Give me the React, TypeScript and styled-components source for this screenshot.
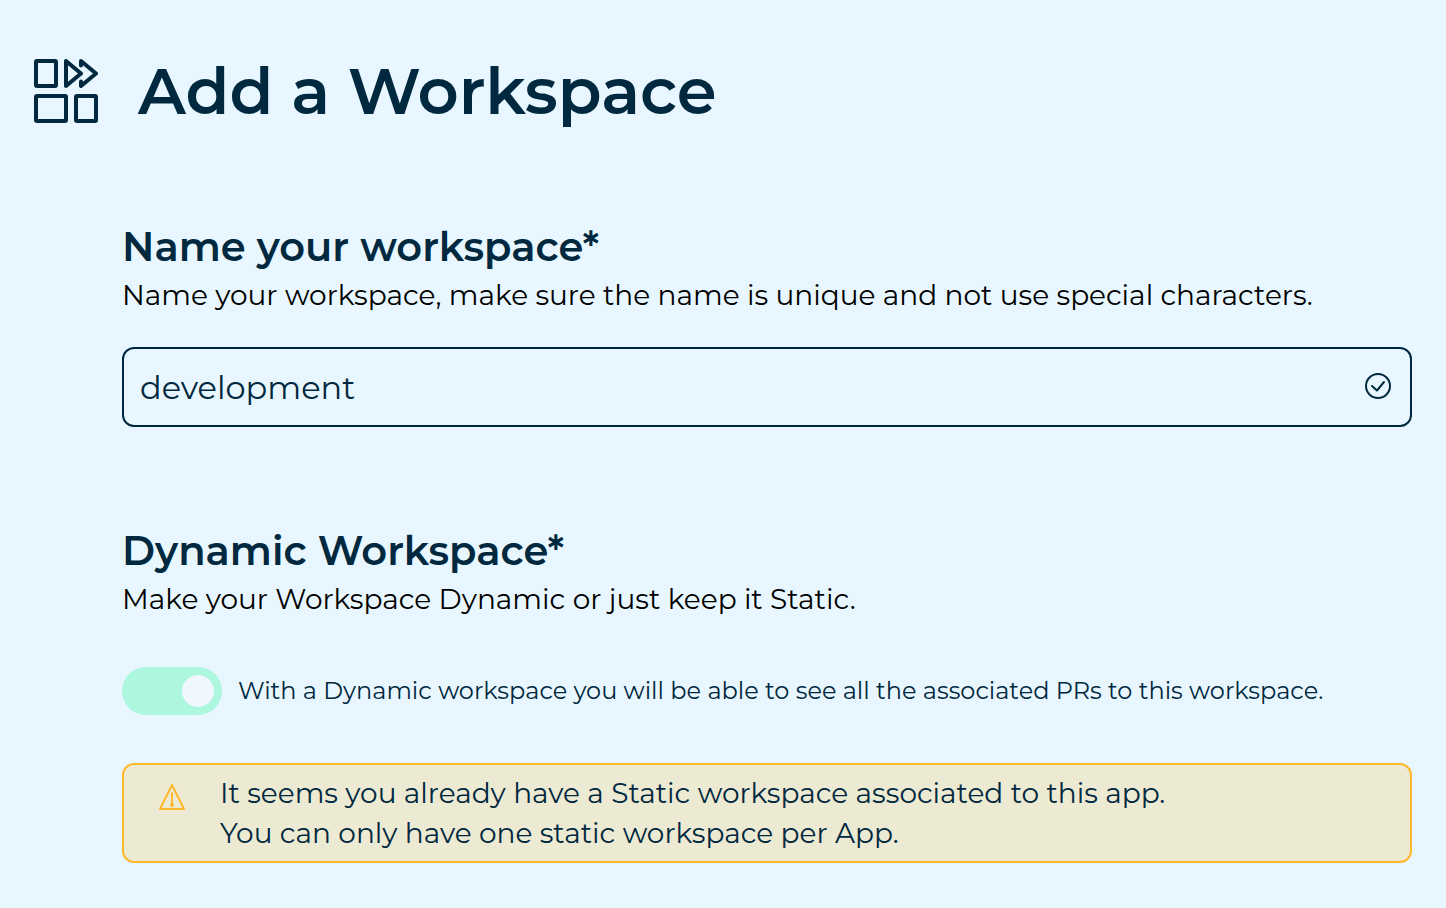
import React, { useState } from "react";
import styled, { createGlobalStyle } from "styled-components";

const ink = "#00283e";
const amber = "#ffb72b";

const GlobalStyle = createGlobalStyle`
  *, *::before, *::after { box-sizing: border-box; }
  body {
    margin: 0;
    background: #e8f7ff;
    color: ${ink};
    font-family: Montserrat, Inter, "Liberation Sans", sans-serif;
  }
`;

const Page = styled.main`
  padding: 51px 34px 45px;
`;

const Header = styled.header`
  display: flex;
  align-items: center;
  gap: 40px;
`;

const Title = styled.h1`
  margin: 0;
  font-size: 64px;
  font-weight: 600;
  line-height: 80px;
`;

const Form = styled.form`
  display: flex;
  flex-direction: column;
  gap: 100px;
  padding: 92px 0 0 88px;
`;

const Section = styled.section`
  display: flex;
  flex-direction: column;
`;

const Heading = styled.h2`
  margin: 0;
  font-size: 40px;
  font-weight: 600;
  line-height: 48px;
`;

const Description = styled.p`
  margin: 4px 0 32px;
  font-size: 28px;
  line-height: 40px;
  color: #000000;
`;

const Field = styled.div`
  display: flex;
  align-items: baseline;
  gap: 16px;
  padding: 0 19px 0 16px;
  border: 2px solid ${ink};
  border-radius: 12px;
`;

const TextInput = styled.input`
  flex: 1;
  min-width: 0;
  height: 76px;
  padding: 0;
  border: 0;
  outline: 0;
  background: transparent;
  color: ${ink};
  font-family: inherit;
  font-size: 32px;
`;

const ToggleRow = styled.div`
  display: flex;
  align-items: center;
  gap: 16px;
  margin-top: 16px;
`;

const Toggle = styled.input`
  appearance: none;
  display: flex;
  flex: none;
  align-items: center;
  justify-content: flex-start;
  width: 100px;
  height: 48px;
  margin: 0;
  padding: 0 8px;
  border-radius: 24px;
  background: #b9cdd8;
  cursor: pointer;

  &::before {
    content: "";
    width: 32px;
    height: 32px;
    border-radius: 50%;
    background: #f0f7ff;
  }

  &:checked {
    justify-content: flex-end;
    background: #acf7dd;
  }
`;

const ToggleLabel = styled.label`
  font-size: 24px;
  line-height: 32px;
`;

const Alert = styled.div`
  display: flex;
  align-items: flex-start;
  gap: 33px;
  margin-top: 48px;
  padding: 8px 35px;
  border: 2px solid ${amber};
  border-radius: 12px;
  background: #edead4;
`;

const AlertIcon = styled.svg`
  flex: none;
  margin-top: 10px;
`;

const AlertText = styled.p`
  margin: 0;
  font-size: 28px;
  line-height: 40px;
`;

const WorkspaceIcon = () => (
  <svg width="64" height="64" viewBox="0 0 64 64" fill="none" stroke={ink} strokeWidth="4" strokeLinecap="round" strokeLinejoin="round" aria-hidden="true">
    <rect x="2" y="2" width="20" height="25" rx="1" />
    <rect x="2" y="37" width="30" height="25" rx="1" />
    <rect x="42" y="37" width="20" height="25" rx="1" />
    <path d="M32 2v25l15-12.500z" />
    <path d="M47 6.500V2l15 12.500L47 27v-4.500" />
  </svg>
);

const CheckIcon = () => (
  <svg width="26" height="26" viewBox="0 0 26 26" fill="none" stroke={ink} strokeWidth="2" strokeLinecap="round" strokeLinejoin="round" aria-hidden="true">
    <circle cx="13" cy="13" r="12" />
    <path d="M7 13l5 4.500L19 9" />
  </svg>
);

export default function App() {
  const [name, setName] = useState("development");
  const [dynamic, setDynamic] = useState(true);

  return (
    <>
      <GlobalStyle />
      <Page>
        <Header>
          <WorkspaceIcon />
          <Title>Add a Workspace</Title>
        </Header>
        <Form onSubmit={(e) => e.preventDefault()}>
          <Section>
            <Heading>
              <label htmlFor="name">Name your workspace*</label>
            </Heading>
            <Description id="name-hint">
              Name your workspace, make sure the name is unique and not use special characters.
            </Description>
            <Field>
              <TextInput
                id="name"
                type="text"
                aria-describedby="name-hint"
                value={name}
                onChange={(e) => setName(e.target.value)}
              />
              <CheckIcon />
            </Field>
          </Section>
          <Section>
            <Heading>Dynamic Workspace*</Heading>
            <Description>Make your Workspace Dynamic or just keep it Static.</Description>
            <ToggleRow>
              <Toggle
                id="dynamic"
                type="checkbox"
                checked={dynamic}
                onChange={(e) => setDynamic(e.target.checked)}
              />
              <ToggleLabel htmlFor="dynamic">
                With a Dynamic workspace you will be able to see all the associated PRs to this workspace.
              </ToggleLabel>
            </ToggleRow>
            <Alert role="alert">
              <AlertIcon width="28" height="28" viewBox="0 0 28 28" fill="none" stroke={amber} strokeWidth="2" strokeLinejoin="round" aria-hidden="true">
                <path d="M13 2L25 26H1z" />
                <path d="M13 10v11" strokeLinecap="round" />
                <circle cx="13" cy="22" r="2" fill={amber} stroke="none" />
              </AlertIcon>
              <AlertText>
                It seems you already have a Static workspace associated to this app.
                <br />
                You can only have one static workspace per App.
              </AlertText>
            </Alert>
          </Section>
        </Form>
      </Page>
    </>
  );
}
